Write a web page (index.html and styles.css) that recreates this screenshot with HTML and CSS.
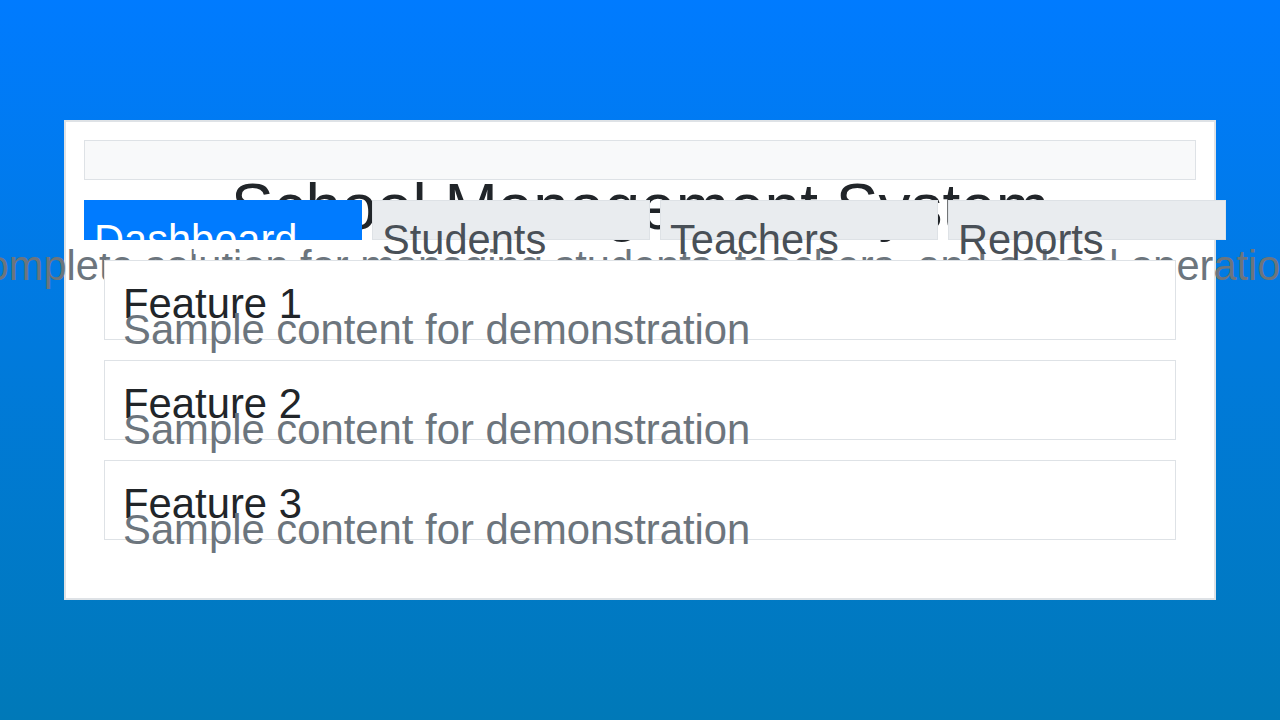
FILE: index.html
```html
<!DOCTYPE html>
<html lang="en">
<head>
<meta charset="utf-8">
<title>School Management System</title>
<link rel="stylesheet" href="styles.css">
</head>
<body>
  <div class="app">
    <header class="header">
      <h1 class="title">School Management System</h1>
      <p class="subtitle">Complete solution for managing students, teachers, and school operations</p>
    </header>
    <nav class="tabs">
      <div class="tab active">Dashboard</div>
      <div class="tab">Students</div>
      <div class="tab">Teachers</div>
      <div class="tab">Reports</div>
    </nav>
    <main class="features">
      <section class="feature">
        <h3 class="feature-title">Feature 1</h3>
        <p class="feature-text">Sample content for demonstration</p>
      </section>
      <section class="feature">
        <h3 class="feature-title">Feature 2</h3>
        <p class="feature-text">Sample content for demonstration</p>
      </section>
      <section class="feature">
        <h3 class="feature-title">Feature 3</h3>
        <p class="feature-text">Sample content for demonstration</p>
      </section>
    </main>
  </div>
</body>
</html>
```
FILE: styles.css
```css
html, body {
  margin: 0;
  padding: 0;
}

body {
  height: 100vh;
  display: flex;
  align-items: center;
  justify-content: center;
  background: linear-gradient(to bottom, #007bff 0%, #0079b8 100%);
  font-family: "Liberation Sans", Arial, sans-serif;
  overflow: hidden;
}

.app {
  box-sizing: border-box;
  width: 1152px;
  height: 480px;
  background: #ffffff;
  border: 2px solid #dee2e6;
  padding: 18px;
}

.header {
  box-sizing: border-box;
  height: 40px;
  background: #f8f9fa;
  border: 1px solid #dee2e6;
  padding-top: 31px;
  display: flex;
  flex-direction: column;
  align-items: center;
}

.title {
  margin: 0;
  font-size: 64px;
  line-height: 70px;
  font-weight: 400;
  color: #212529;
  white-space: nowrap;
}

.subtitle {
  margin: 0;
  font-size: 41.6px;
  color: #6c757d;
  white-space: nowrap;
}

.tabs {
  margin-top: 20px;
  display: flex;
  gap: 10px;
}

.tab {
  position: relative;
  box-sizing: border-box;
  flex: 0 0 25%;
  height: 40px;
  padding: 15px 9px 0;
  background: #e9ecef;
  border: 1px solid #dee2e6;
  color: #495057;
  font-size: 41.6px;
  white-space: nowrap;
}

.tab.active {
  background: #007bff;
  border-color: #007bff;
  color: #ffffff;
}

.features {
  margin-top: 20px;
  padding: 0 20px;
  display: flex;
  flex-direction: column;
  gap: 20px;
}

.feature {
  position: relative;
  box-sizing: border-box;
  height: 80px;
  padding: 19px 18px;
  background: #ffffff;
  border: 1px solid #dee2e6;
}

.feature-title {
  margin: 0;
  height: 26px;
  font-size: 41.8px;
  font-weight: 400;
  color: #212529;
  white-space: nowrap;
}

.feature-text {
  margin: 0;
  font-size: 41.8px;
  color: #6c757d;
  white-space: nowrap;
}
```
